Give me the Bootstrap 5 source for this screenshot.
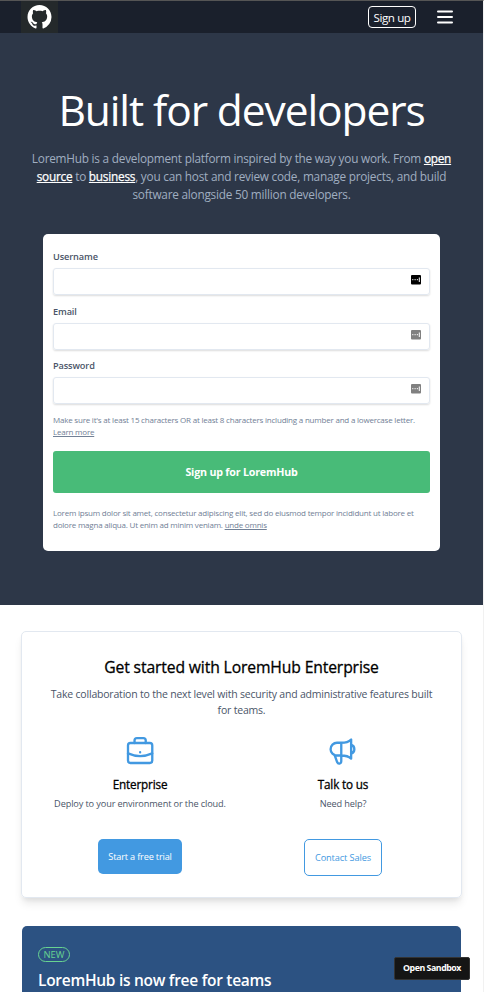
<!DOCTYPE html>
<html lang="en">
<head>
<meta charset="utf-8">
<meta name="viewport" content="width=device-width, initial-scale=1">
<title>LoremHub</title>
<link href="https://cdn.jsdelivr.net/npm/bootstrap@5.3.0/dist/css/bootstrap.min.css" rel="stylesheet">
<style>
body{font-family:"Open Sans","Noto Sans",sans-serif;font-size:10.7px;line-height:16px;color:#000;height:992px;overflow:hidden;background:#fff}
a{color:inherit}
.ln{display:block;white-space:nowrap}
.page{border-top:1px solid #555;border-right:1px solid #f1f1f1;height:992px;overflow:hidden}
.topbar{height:32px;background:#1a202c;padding:0 30px 0 21px}
.logo{width:37px;height:32px;background:#24292b}
.logo svg{width:25px;height:24px}
.menu-icon{margin-left:21px}
.btn-top{font-size:11.6px;line-height:22px;width:48px;height:22px;border:1px solid #fff;border-radius:4px;padding:0;color:#fff;letter-spacing:-.4px}
.hero{background:#2d3748;height:572px;padding-top:45px}
.hero h1{font-size:42.5px;line-height:64px;margin:0;color:#fff;font-weight:400;letter-spacing:-1.1px}
.intro{font-size:11.8px;line-height:18px;color:#a0aec0;margin:7px 0 31px;letter-spacing:-.23px}
.intro a{color:#fff;-webkit-text-stroke:.25px}
.signup{width:397px;height:317px;border-radius:5px;padding:15px 10px 0;background:#fff}
.signup label{display:block;font-size:9.2px;font-weight:600;color:#4a5568;line-height:16px;height:19px;letter-spacing:-.12px}
.field{height:27px;border:1px solid #e2e8f0;border-radius:3px;box-shadow:0 1px 2px rgba(0,0,0,.14);margin-bottom:8.500px;padding:0 8px 3px}
.hint{font-size:8px;line-height:12px;color:#718096;letter-spacing:-.21px;padding-top:1.500px}
.btn-go{height:42px;width:100%;background:#48bb78;color:#fff;font-weight:700;font-size:10.7px;border-radius:3px;padding:0;border:0;margin:13px 0 12px;letter-spacing:-.2px}
.panel{width:441px;height:267px;margin:26px 0 0 21px;border:1px solid #e2e8f0;border-radius:5px;box-shadow:0 7px 10px -2px rgba(0,0,0,.1),0 3px 4px -1px rgba(0,0,0,.05);padding-top:23px}
.panel h2{font-size:15.700px;line-height:24px;margin:0;font-weight:500;letter-spacing:-.13px;-webkit-text-stroke:.3px}
.desc{font-size:10.500px;color:#4a5568;margin:7px 0 17px;letter-spacing:-.2px}
.cell{width:203px}
.cell svg{width:32px;height:32px;display:block;margin:0 auto}
.cell h3{font-size:11.700px;line-height:18px;margin:8px 0 4px;font-weight:500;letter-spacing:-.15px;-webkit-text-stroke:.3px}
.cell p{font-size:9.2px;line-height:14px;color:#4a5568;margin:0 0 28px;letter-spacing:-.13px}
.btn-a{font-size:9.2px;line-height:14px;border-radius:5px;padding:0;background:#4299e1;color:#fff;width:84px;height:35px;border:0;letter-spacing:-.18px}
.btn-b{font-size:9.2px;line-height:14px;border-radius:5px;padding:0;background:#fff;color:#4299e1;width:78px;height:37px;border:1px solid #4299e1;letter-spacing:-.1px}
.promo{width:439px;height:120px;margin:28px 0 0 22px;background:#2c5282;border-radius:5px 5px 0 0;padding:21px 16px 0;color:#fff}
.pill{display:block;width:32px;height:15px;border:1px solid #68d391;border-radius:8px;color:#68d391;font-size:9.4px;line-height:13px;text-align:center}
.promo h2{font-size:15.500px;line-height:24px;margin:6px 0 0;font-weight:600;letter-spacing:-.28px}
.sandbox{position:fixed;left:394px;top:957px;width:76px;height:23px;background:#151515;border:1px solid #333;border-radius:2px;color:#fff;font-size:8.800px;font-weight:700;line-height:21px;text-align:center;padding:0;white-space:nowrap;letter-spacing:-.45px}
</style>
</head>
<body>
<div class="page">
<nav class="topbar d-flex align-items-center">
  <a class="logo d-flex align-items-center justify-content-center" href="#"><svg viewBox="0 0 16 16" fill="#fff"><path d="M8 0C3.58 0 0 3.58 0 8c0 3.54 2.29 6.53 5.47 7.59.4.07.55-.17.55-.38 0-.19-.01-.82-.01-1.49-2.01.37-2.53-.49-2.69-.94-.09-.23-.48-.94-.82-1.13-.28-.15-.68-.52-.01-.53.63-.01 1.08.58 1.23.82.72 1.21 1.87.87 2.33.66.07-.52.28-.87.51-1.07-1.78-.2-3.64-.89-3.64-3.95 0-.87.31-1.59.82-2.15-.08-.2-.36-1.02.08-2.12 0 0 .67-.21 2.2.82.64-.18 1.32-.27 2-.27.68 0 1.36.09 2 .27 1.53-1.04 2.2-.82 2.2-.82.44 1.1.16 1.92.08 2.12.51.56.82 1.27.82 2.15 0 3.07-1.87 3.75-3.65 3.95.29.25.54.73.54 1.48 0 1.07-.01 1.93-.01 2.2 0 .21.15.46.55.38A8.013 8.013 0 0 0 16 8c0-4.42-3.58-8-8-8z"/></svg></a>
  <button class="btn btn-top ms-auto">Sign up</button>
  <svg class="menu-icon" width="16" height="16" viewBox="0 0 16 16" stroke="#fff" stroke-width="2" stroke-linecap="round"><path d="M1 2.500h14M1 8h14M1 13.500h14"/></svg>
</nav>
<header class="hero text-center">
  <h1><span class="ln">Built for developers</span></h1>
  <p class="intro"><span class="ln">LoremHub is a development platform inspired by the way you work. From <a href="#">open</a></span><span class="ln"><a href="#">source</a> to <a href="#">business</a>, you can host and review code, manage projects, and build</span><span class="ln">software alongside 50 million developers.</span></p>
  <form class="signup text-start mx-auto">
    <label>Username</label>
    <div class="field d-flex align-items-center justify-content-end"><svg width="10" height="10" viewBox="0 0 10 10"><rect width="10" height="9.5" rx="1"/><path d="M1.200 4.700h1.200M3.500 4.700h1.200M5.800 4.700H7M8.300 2.500v4.500" stroke="#fff"/></svg></div>
    <label>Email</label>
    <div class="field d-flex align-items-center justify-content-end"><svg width="10" height="10" viewBox="0 0 10 10"><rect width="10" height="9.5" rx="1" fill="#808080"/><path d="M1.200 4.700h1.200M3.500 4.700h1.200M5.800 4.700H7M8.300 2.500v4.500" stroke="#fff"/></svg></div>
    <label>Password</label>
    <div class="field d-flex align-items-center justify-content-end"><svg width="10" height="10" viewBox="0 0 10 10"><rect width="10" height="9.5" rx="1" fill="#808080"/><path d="M1.200 4.700h1.200M3.500 4.700h1.200M5.800 4.700H7M8.300 2.500v4.500" stroke="#fff"/></svg></div>
    <div class="hint"><span class="ln">Make sure it's at least 15 characters OR at least 8 characters including a number and a lowercase letter.</span><span class="ln"><a href="#">Learn more</a></span></div>
    <button type="button" class="btn btn-go">Sign up for LoremHub</button>
    <div class="hint"><span class="ln">Lorem ipsum dolor sit amet, consectetur adipiscing elit, sed do eiusmod tempor incididunt ut labore et</span><span class="ln">dolore magna aliqua. Ut enim ad minim veniam. <a href="#">unde omnis</a></span></div>
  </form>
</header>
<section class="panel text-center">
  <h2>Get started with LoremHub Enterprise</h2>
  <p class="desc"><span class="ln">Take collaboration to the next level with security and administrative features built</span><span class="ln">for teams.</span></p>
  <div class="d-flex justify-content-center">
    <div class="cell">
      <svg viewBox="0 0 24 24" fill="none" stroke="#4299e1" stroke-width="1.75" stroke-linecap="round" stroke-linejoin="round"><rect x="3" y="6" width="18.200" height="15" rx="1.800"/><path d="M7.900 6V4.200a1.800 1.800 0 0 1 1.800-1.800h4.800a1.800 1.800 0 0 1 1.800 1.800V6M3 13.800q9.100 4 18.200 0M12.100 12.900v.01"/></svg>
      <h3>Enterprise</h3><p><span class="ln">Deploy to your environment or the cloud.</span></p><button class="btn btn-a">Start a free trial</button>
    </div>
    <div class="cell">
      <svg viewBox="0 0 24 24" fill="none" stroke="#4299e1" stroke-width="1.75" stroke-linecap="round" stroke-linejoin="round"><path d="M10.700 5.800v9.600M10.700 5.800c3 0 5.500-.6 7.400-2.400v14.300c-1.900-1.700-4.400-2.300-7.400-2.300H7.500a4.800 4.800 0 0 1 0-9.600zM18.100 7.200a3.600 3.600 0 0 1 0 6.800M5.700 15l1.900 5.300c.8 1.900 3.100 1.300 3.100-.6v-4.300"/></svg>
      <h3>Talk to us</h3><p><span class="ln">Need help?</span></p><button class="btn btn-b">Contact Sales</button>
    </div>
  </div>
</section>
<section class="promo">
  <span class="pill">NEW</span>
  <h2>LoremHub is now free for teams</h2>
</section>
</div>
<button class="btn sandbox">Open Sandbox</button>
<script src="https://cdn.jsdelivr.net/npm/bootstrap@5.3.0/dist/js/bootstrap.bundle.min.js"></script>
</body>
</html>
